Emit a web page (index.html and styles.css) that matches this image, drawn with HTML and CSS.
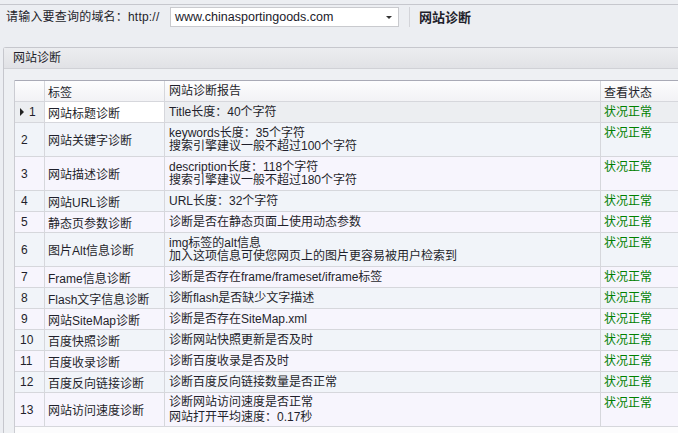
FILE: index.html
```html
<!DOCTYPE html>
<html lang="zh-CN">
<head>
    <meta charset="UTF-8">
    <meta name="viewport" content="width=device-width, initial-scale=1.0">
    <title>网站诊断</title>
    <link rel="stylesheet" href="styles.css">
</head>
<body>
    <div class="toolbar">
        <span class="label">请输入要查询的域名：http://</span>
        <div class="combo">
            <span class="combo-text">www.chinasportingoods.com</span>
            <span class="combo-arrow"></span>
        </div>
        <span class="sep"></span>
        <span class="tool-title">网站诊断</span>
    </div>

    <div class="panel">
        <div class="panel-head">网站诊断</div>
        <div class="panel-body">
            <div class="grid-wrap">
                <div class="grid">
                    <div class="row head">
                        <div class="cell num"></div>
                        <div class="cell">标签</div>
                        <div class="cell report">网站诊断报告</div>
                        <div class="cell">查看状态</div>
                    </div>
                    <div class="row focus">
                        <div class="cell num"><span class="arrow"></span>1</div>
                        <div class="cell tag current">网站标题诊断</div>
                        <div class="cell report">Title长度：40个字符</div>
                        <div class="cell status">状况正常</div>
                    </div>
                    <div class="row even tall">
                        <div class="cell num">2</div>
                        <div class="cell tag">网站关键字诊断</div>
                        <div class="cell report">keywords长度：35个字符<br>搜索引擎建议一般不超过100个字符</div>
                        <div class="cell status">状况正常</div>
                    </div>
                    <div class="row odd tall">
                        <div class="cell num">3</div>
                        <div class="cell tag">网站描述诊断</div>
                        <div class="cell report">description长度：118个字符<br>搜索引擎建议一般不超过180个字符</div>
                        <div class="cell status">状况正常</div>
                    </div>
                    <div class="row even">
                        <div class="cell num">4</div>
                        <div class="cell tag">网站URL诊断</div>
                        <div class="cell report">URL长度：32个字符</div>
                        <div class="cell status">状况正常</div>
                    </div>
                    <div class="row odd">
                        <div class="cell num">5</div>
                        <div class="cell tag">静态页参数诊断</div>
                        <div class="cell report">诊断是否在静态页面上使用动态参数</div>
                        <div class="cell status">状况正常</div>
                    </div>
                    <div class="row even tall">
                        <div class="cell num">6</div>
                        <div class="cell tag">图片Alt信息诊断</div>
                        <div class="cell report">img标签的alt信息<br>加入这项信息可使您网页上的图片更容易被用户检索到</div>
                        <div class="cell status">状况正常</div>
                    </div>
                    <div class="row odd">
                        <div class="cell num">7</div>
                        <div class="cell tag">Frame信息诊断</div>
                        <div class="cell report">诊断是否存在frame/frameset/iframe标签</div>
                        <div class="cell status">状况正常</div>
                    </div>
                    <div class="row even">
                        <div class="cell num">8</div>
                        <div class="cell tag">Flash文字信息诊断</div>
                        <div class="cell report">诊断flash是否缺少文字描述</div>
                        <div class="cell status">状况正常</div>
                    </div>
                    <div class="row odd">
                        <div class="cell num">9</div>
                        <div class="cell tag">网站SiteMap诊断</div>
                        <div class="cell report">诊断是否存在SiteMap.xml</div>
                        <div class="cell status">状况正常</div>
                    </div>
                    <div class="row even">
                        <div class="cell num wide">10</div>
                        <div class="cell tag">百度快照诊断</div>
                        <div class="cell report">诊断网站快照更新是否及时</div>
                        <div class="cell status">状况正常</div>
                    </div>
                    <div class="row odd">
                        <div class="cell num wide">11</div>
                        <div class="cell tag">百度收录诊断</div>
                        <div class="cell report">诊断百度收录是否及时</div>
                        <div class="cell status">状况正常</div>
                    </div>
                    <div class="row even">
                        <div class="cell num wide">12</div>
                        <div class="cell tag">百度反向链接诊断</div>
                        <div class="cell report">诊断百度反向链接数量是否正常</div>
                        <div class="cell status">状况正常</div>
                    </div>
                    <div class="row odd tall">
                        <div class="cell num wide">13</div>
                        <div class="cell tag">网站访问速度诊断</div>
                        <div class="cell report loose">诊断网站访问速度是否正常<br>网站打开平均速度：0.17秒</div>
                        <div class="cell status">状况正常</div>
                    </div>
                </div>
            </div>
        </div>
    </div>
</body>
</html>
```

FILE: styles.css
```css
html {
    overflow: hidden;
}

body {
    margin: 0;
    width: 678px;
    height: 433px;
    overflow: hidden;
    background-color: #eceef2;
    font-family: "Liberation Sans", "Noto Sans CJK SC", sans-serif;
    font-size: 12px;
    color: #1f1f2b;
    display: flex;
    flex-direction: column;
}

.toolbar {
    margin-top: 4px;
    border-top: 1px solid #c6c7cd;
    height: 26px;
    padding-top: 2px;
    display: flex;
    align-items: flex-start;
    flex-shrink: 0;
}

.label {
    margin-left: 6px;
    line-height: 20px;
    width: 164px;
    letter-spacing: 0.2px;
}

.combo {
    width: 217px;
    height: 18px;
    border: 1px solid #c9cace;
    background-color: #fff;
    display: flex;
    align-items: center;
    justify-content: space-between;
    padding: 0 6px 0 4px;
}

.combo-text {
    font-size: 12.5px;
    color: #1a1a2a;
}

.combo-arrow {
    width: 0;
    height: 0;
    border-left: 3px solid transparent;
    border-right: 3px solid transparent;
    border-top: 3px solid #333;
}

.sep {
    width: 1px;
    height: 20px;
    background-color: #d3d4d9;
    margin-left: 10px;
}

.tool-title {
    margin-left: 9px;
    font-size: 13px;
    font-weight: bold;
    line-height: 20px;
    font-family: "Noto Sans CJK SC", sans-serif;
}

.panel {
    flex: 1;
    min-height: 0;
    margin-top: 14px;
    margin-left: 3px;
    border-left: 1px solid #c6c7cd;
    border-top: 1px solid #c6c7cd;
    border-top-left-radius: 3px;
    background-color: #eef0f3;
    display: flex;
    flex-direction: column;
}

.panel-head {
    height: 20px;
    line-height: 20px;
    padding-left: 9px;
    background: linear-gradient(#ecedf0, #e1e2e6);
    border-bottom: 1px solid #d0d1d6;
    flex-shrink: 0;
}

.panel-body {
    flex: 1;
    min-height: 0;
    padding: 11px 0 0 10px;
    display: flex;
    overflow: hidden;
}

.grid-wrap {
    flex: 1;
    min-width: 0;
    background-color: #fcfcfd;
    border-left: 1px solid #cbccd2;
    overflow: hidden;
}

.grid {
    display: grid;
    grid-template-columns: 29px 119px 435px 1fr;
    gap: 1px;
    width: 720px;
    padding-bottom: 1px;
    background-color: #d6d7dc;
    border-top: 1px solid #a9aab6;
}

.row {
    display: contents;
}

.cell {
    height: 20px;
    display: flex;
    align-items: center;
    padding: 0 3px;
    white-space: nowrap;
    overflow: hidden;
}

.row.tall .cell {
    height: 33px;
}

.head .cell {
    background: linear-gradient(#fdfdfe, #f2f2f5);
}

.focus .cell {
    background-color: #eceef1;
}

.focus .cell.current {
    background-color: #fff;
}

.even .cell {
    background-color: #f1f4f9;
}

.odd .cell {
    background-color: #f7f5fd;
}

.num {
    padding-left: 6px;
}

.num.wide {
    padding-left: 5px;
}

.focus .num {
    padding-left: 5px;
}

.arrow {
    width: 0;
    height: 0;
    border-top: 4px solid transparent;
    border-bottom: 4px solid transparent;
    border-left: 4px solid #222;
    margin-right: 5px;
}

.report {
    padding-left: 4px;
    line-height: 13px;
}

.report.loose {
    line-height: 15px;
}

.status {
    align-items: flex-start;
    line-height: 20px;
    color: #008000;
}
```
